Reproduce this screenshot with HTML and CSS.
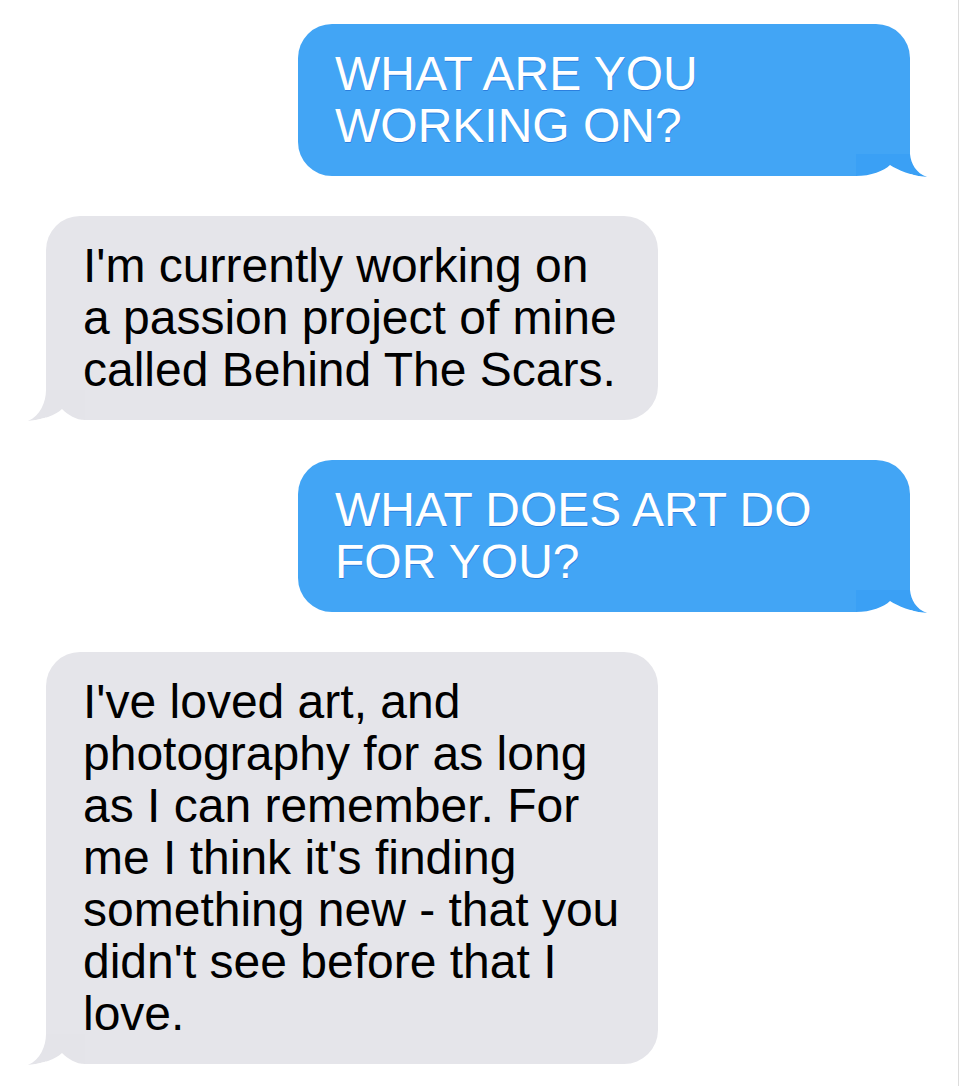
FILE: index.html
```html
<!DOCTYPE html>
<html lang="en">
<head>
<meta charset="utf-8">
<title>Messages</title>
<link rel="stylesheet" href="styles.css">
</head>
<body>
<div class="frame">
  <div class="thread">
    <div class="bubble me">WHAT ARE YOU WORKING ON?</div>
    <div class="bubble them">I'm currently working on a passion project of mine called Behind The Scars.</div>
    <div class="bubble me">WHAT DOES ART DO FOR YOU?</div>
    <div class="bubble them">I've loved art, and photography for as long as I can remember. For me I think it's finding something new - that you didn't see before that I love.</div>
  </div>
</div>
</body>
</html>
```
FILE: styles.css
```css
html, body {
  margin: 0;
  padding: 0;
  background: #ffffff;
}

.frame {
  width: 959px;
  min-height: 1086px;
  box-sizing: border-box;
  border-right: 1px solid #dcdcdc;
}

.thread {
  display: flex;
  flex-direction: column;
  gap: 40px;
  padding-top: 24px;
}

.bubble {
  position: relative;
  width: 612px;
  box-sizing: border-box;
  padding: 24px 34px 24px 37px;
  border-radius: 34px;
  font-family: "Liberation Sans", Arial, Helvetica, sans-serif;
  font-size: 48px;
  line-height: 52px;
}

.me {
  align-self: flex-end;
  margin-right: 48px;
  background: #42a5f5;
  color: #ffffff;
  border-bottom-right-radius: 0;
  text-shadow: 0.5px 0.5px 0 rgba(20, 90, 200, 0.5);
}

.them {
  align-self: flex-start;
  margin-left: 46px;
  background: #e5e5ea;
  color: #000000;
  border-bottom-left-radius: 0;
}

.me::before,
.me::after {
  content: "";
  position: absolute;
  right: -17px;
  bottom: -2px;
  width: 71px;
  height: 24px;
}

.me::before {
  background: #3aa0f5;
  clip-path: path("M0 0 H54 C55 10 60 19 71 23 C55 22 42 16 34 11 C28 17 15 22 0 22 Z");
}

.me::after {
  background: #ffffff;
  clip-path: path("M0 22 C15 22 28 17 34 11 C42 16 55 22 71 23 L71 24 L0 24 Z");
}

.them::before,
.them::after {
  content: "";
  position: absolute;
  left: -18px;
  bottom: -2px;
  width: 57px;
  height: 32px;
}

.them::before {
  background: #e4e4e9;
  clip-path: path("M18 0 C18 12 12 26 0 31 C14 30 28 25 34 19 C40 25 48 30 57 30 L57 0 Z");
}

.them::after {
  background: #ffffff;
  clip-path: path("M0 31 C14 30 28 25 34 19 C40 25 48 30 57 30 L57 32 L0 32 Z");
}
```
